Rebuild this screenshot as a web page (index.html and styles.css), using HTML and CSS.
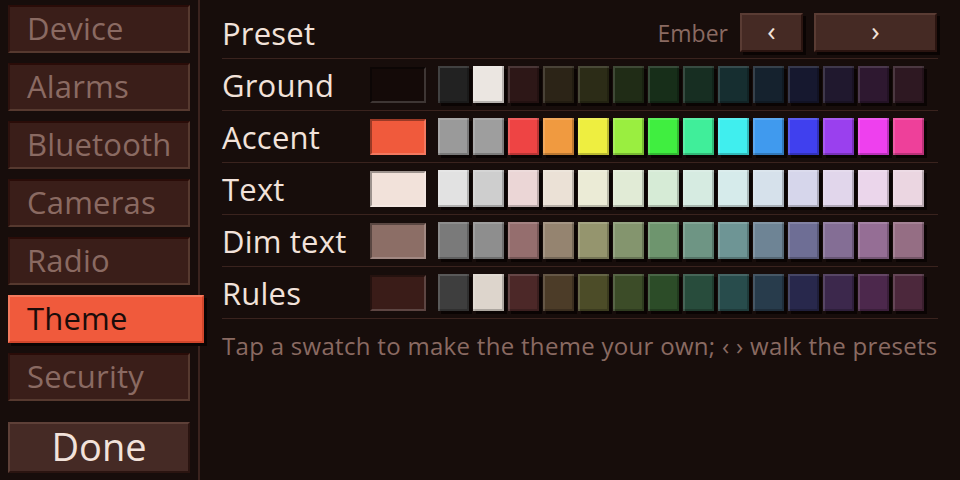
FILE: index.html
```html
<!DOCTYPE html>
<html lang="en">
<head>
    <meta charset="UTF-8">
    <title>Settings | Theme</title>
    <link rel="stylesheet" href="styles.css">
</head>
<body>

    <div class="screen">
        <div class="sidebar">
            <div class="tab">Device</div>
            <div class="tab">Alarms</div>
            <div class="tab">Bluetooth</div>
            <div class="tab">Cameras</div>
            <div class="tab">Radio</div>
            <div class="tab active">Theme</div>
            <div class="tab">Security</div>
            <div class="done">Done</div>
        </div>

        <div class="main">
            <div class="row header">
                <div class="label">Preset</div>
                <div class="preset">
                    <span class="preset-name">Ember</span>
                    <div class="btn prev">&lsaquo;</div>
                    <div class="btn next">&rsaquo;</div>
                </div>
            </div>

            <div class="row">
                <div class="label">Ground</div>
                <div class="current" style="background:#140a08"></div>
                <div class="swatches">
                    <div class="swatch" style="background:#222222"></div>
                    <div class="swatch" style="background:#ebe6e1"></div>
                    <div class="swatch" style="background:#2d1717"></div>
                    <div class="swatch" style="background:#2c2417"></div>
                    <div class="swatch" style="background:#2c2c17"></div>
                    <div class="swatch" style="background:#202c16"></div>
                    <div class="swatch" style="background:#172e19"></div>
                    <div class="swatch" style="background:#172e22"></div>
                    <div class="swatch" style="background:#162e30"></div>
                    <div class="swatch" style="background:#15222e"></div>
                    <div class="swatch" style="background:#16182f"></div>
                    <div class="swatch" style="background:#20182e"></div>
                    <div class="swatch" style="background:#2e1830"></div>
                    <div class="swatch" style="background:#2e1822"></div>
                </div>
            </div>

            <div class="row">
                <div class="label">Accent</div>
                <div class="current" style="background:#f05a3c"></div>
                <div class="swatches">
                    <div class="swatch" style="background:#9a9a9a"></div>
                    <div class="swatch" style="background:#9e9e9e"></div>
                    <div class="swatch" style="background:#ee4444"></div>
                    <div class="swatch" style="background:#f09a40"></div>
                    <div class="swatch" style="background:#eeee40"></div>
                    <div class="swatch" style="background:#9aee40"></div>
                    <div class="swatch" style="background:#40ee40"></div>
                    <div class="swatch" style="background:#40ee9a"></div>
                    <div class="swatch" style="background:#40eeee"></div>
                    <div class="swatch" style="background:#409aee"></div>
                    <div class="swatch" style="background:#4040ee"></div>
                    <div class="swatch" style="background:#9a40ee"></div>
                    <div class="swatch" style="background:#ee40ee"></div>
                    <div class="swatch" style="background:#ee409a"></div>
                </div>
            </div>

            <div class="row">
                <div class="label">Text</div>
                <div class="current" style="background:#f2e2da"></div>
                <div class="swatches">
                    <div class="swatch" style="background:#e2e2e2"></div>
                    <div class="swatch" style="background:#cecece"></div>
                    <div class="swatch" style="background:#ebd6d6"></div>
                    <div class="swatch" style="background:#ebe1d6"></div>
                    <div class="swatch" style="background:#ebebd6"></div>
                    <div class="swatch" style="background:#e1ebd6"></div>
                    <div class="swatch" style="background:#d6ebd6"></div>
                    <div class="swatch" style="background:#d6ebe1"></div>
                    <div class="swatch" style="background:#d6ebeb"></div>
                    <div class="swatch" style="background:#d6e1eb"></div>
                    <div class="swatch" style="background:#d6d6eb"></div>
                    <div class="swatch" style="background:#e1d6eb"></div>
                    <div class="swatch" style="background:#ebd6eb"></div>
                    <div class="swatch" style="background:#ebd6e1"></div>
                </div>
            </div>

            <div class="row">
                <div class="label">Dim text</div>
                <div class="current" style="background:#8c6e66"></div>
                <div class="swatches">
                    <div class="swatch" style="background:#7a7a7a"></div>
                    <div class="swatch" style="background:#8e8e8e"></div>
                    <div class="swatch" style="background:#956e6e"></div>
                    <div class="swatch" style="background:#958470"></div>
                    <div class="swatch" style="background:#95956e"></div>
                    <div class="swatch" style="background:#84956e"></div>
                    <div class="swatch" style="background:#6e956e"></div>
                    <div class="swatch" style="background:#6e9584"></div>
                    <div class="swatch" style="background:#6e9595"></div>
                    <div class="swatch" style="background:#6e8495"></div>
                    <div class="swatch" style="background:#6e6e95"></div>
                    <div class="swatch" style="background:#846e95"></div>
                    <div class="swatch" style="background:#956e95"></div>
                    <div class="swatch" style="background:#956e84"></div>
                </div>
            </div>

            <div class="row">
                <div class="label">Rules</div>
                <div class="current" style="background:#3a1c18"></div>
                <div class="swatches">
                    <div class="swatch" style="background:#3e3e3e"></div>
                    <div class="swatch" style="background:#ddd5cc"></div>
                    <div class="swatch" style="background:#4c2828"></div>
                    <div class="swatch" style="background:#4c3c28"></div>
                    <div class="swatch" style="background:#4c4c28"></div>
                    <div class="swatch" style="background:#3c4c28"></div>
                    <div class="swatch" style="background:#2c4c28"></div>
                    <div class="swatch" style="background:#284c3c"></div>
                    <div class="swatch" style="background:#284c4c"></div>
                    <div class="swatch" style="background:#283c4c"></div>
                    <div class="swatch" style="background:#28284c"></div>
                    <div class="swatch" style="background:#3c284c"></div>
                    <div class="swatch" style="background:#4c284c"></div>
                    <div class="swatch" style="background:#4c283c"></div>
                </div>
            </div>

            <p class="hint">Tap a swatch to make the theme your own; &lsaquo; &rsaquo; walk the presets</p>
        </div>
    </div>

</body>
</html>
```

FILE: styles.css
```css
body {
    font-family: "Open Sans", "Noto Sans", sans-serif;
    background: #170d0b;
    color: #f2e2da;
    margin: 0;
    padding: 0;
}
.screen {
    display: flex;
    width: 960px;
    height: 480px;
}
.sidebar {
    width: 200px;
    padding: 5px 0 7px 8px;
    display: flex;
    flex-direction: column;
    gap: 10px;
    border-right: 2px solid #3a231e;
    box-sizing: border-box;
}
.tab {
    width: 182px;
    height: 48px;
    box-sizing: border-box;
    background: #3a1e19;
    border-top: 2px solid #2a0c08;
    border-left: 2px solid #2e120e;
    border-bottom: 2px solid #56392f;
    border-right: 2px solid #56392f;
    color: #8a6a62;
    font-size: 31px;
    letter-spacing: 0.2px;
    line-height: 43px;
    padding-left: 17px;
}
.tab.active {
    width: 196px;
    background: #f05a3c;
    border-top-color: #f47a5e;
    border-left-color: #f47a5e;
    border-bottom-color: #d0462c;
    border-right-color: #d0462c;
    color: #1a0c0a;
    box-shadow: 3px 3px 0 #0a0403;
    position: relative;
}
.done {
    margin-top: auto;
    width: 182px;
    height: 51px;
    box-sizing: border-box;
    background: #452a25;
    border-top: 2px solid #5e4038;
    border-left: 2px solid #5e4038;
    border-bottom: 2px solid #2a1410;
    border-right: 2px solid #2a1410;
    color: #f2e2da;
    font-size: 38px;
    line-height: 45px;
    text-align: center;
}
.main {
    flex: 1;
    padding: 0 22px;
}
.row {
    display: flex;
    align-items: center;
    height: 52px;
    box-sizing: border-box;
    border-bottom: 1px solid #3a231e;
}
.row.header {
    height: 59px;
    padding-top: 7px;
}
.label {
    width: 148px;
    font-size: 31px;
    letter-spacing: 0.2px;
    flex-shrink: 0;
}
.preset {
    margin-left: auto;
    display: flex;
    align-items: center;
    gap: 11px;
}
.preset-name {
    color: #8a6a62;
    font-size: 23px;
    margin-right: 1px;
}
.btn {
    height: 39px;
    box-sizing: border-box;
    background: #452a24;
    border-top: 2px solid #5a3c34;
    border-left: 2px solid #5a3c34;
    border-bottom: 2px solid #2a1410;
    border-right: 2px solid #2a1410;
    box-shadow: 3px 3px 0 #0a0403;
    color: #f2e2da;
    font-size: 28px;
    line-height: 31px;
    text-align: center;
}
.btn.prev {
    width: 63px;
}
.btn.next {
    width: 123px;
    margin-right: 1px;
}
.current {
    width: 56px;
    height: 36px;
    box-sizing: border-box;
    border-top: 2px solid rgba(0, 0, 0, 0.35);
    border-left: 2px solid rgba(0, 0, 0, 0.35);
    border-bottom: 2px solid rgba(255, 255, 255, 0.18);
    border-right: 2px solid rgba(255, 255, 255, 0.18);
    margin-right: 12px;
    flex-shrink: 0;
}
.swatches {
    display: flex;
    gap: 4px;
}
.swatch {
    width: 31px;
    height: 37px;
    box-shadow: inset 2px 2px 0 rgba(255, 255, 255, 0.14), inset -2px -2px 0 rgba(0, 0, 0, 0.22), 3px 3px 0 #0a0403;
}
.hint {
    margin: 0;
    padding-top: 10px;
    color: #8a6a62;
    font-size: 24px;
    letter-spacing: 0.3px;
}
```
